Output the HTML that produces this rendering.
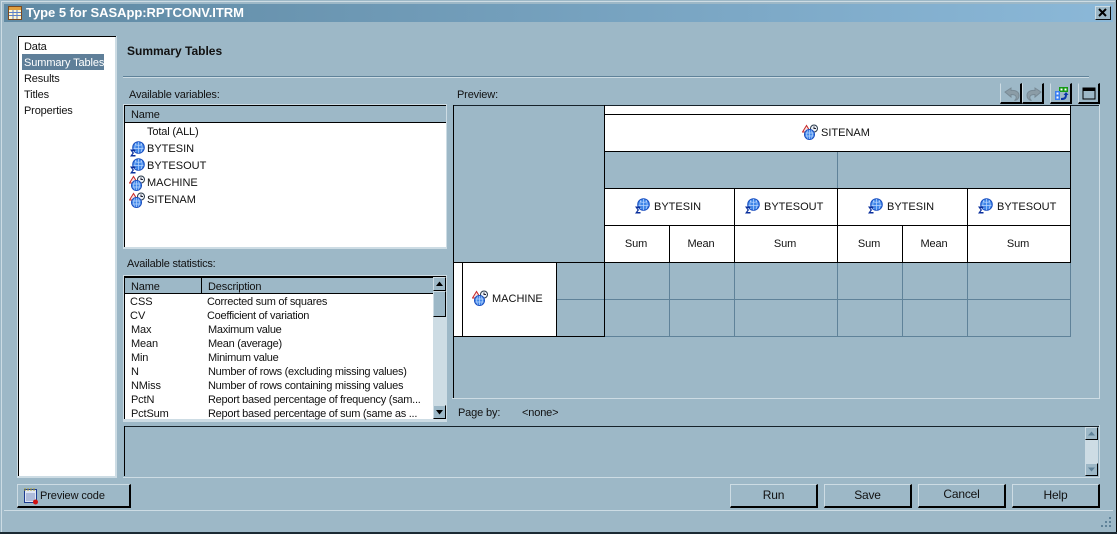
<!DOCTYPE html>
<html><head><meta charset="utf-8"><style>
html,body{margin:0;padding:0}
body{width:1117px;height:534px;overflow:hidden;position:relative;background:#9db8c7;font:11px/14px "Liberation Sans",sans-serif;color:#111}
div,span,svg{position:absolute}
.t{white-space:nowrap;letter-spacing:-.15px;margin-top:1px}
.u{white-space:nowrap;letter-spacing:0;margin-top:1px}
.d{white-space:nowrap;letter-spacing:-.27px;margin-top:1px}
.b{background:#000}.g{background:#5f8299}.l{background:#cddce4}.w{background:#fff}
.btn{box-sizing:border-box;background:#9db8c7;border:1px solid #cddce4;border-right:2px solid #000;border-bottom:2px solid #000;text-align:center;line-height:20px;height:24px;top:484px;font-size:12px;letter-spacing:-.2px}
.tb{box-sizing:border-box;width:22px;height:21px;top:83px;border-right:2px solid #000;border-bottom:2px solid #000;border-left:1px solid #cddce4;border-top:1px solid #9db8c7}
.c{text-align:center;white-space:nowrap;letter-spacing:-.1px;margin-top:1px}
</style></head><body>
<svg width="0" height="0" style="left:0;top:0"><defs>
<symbol id="m" viewBox="0 0 16 16"><circle cx="9.500" cy="6.500" r="5.800" fill="#3f86e8" stroke="#1a4fc0"/><path d="M6 3.500c2 1 5 1 7 0M4.500 7.500h10M9.500 1v11M7 2c-1.500 3-1.500 6 0 9M12 2c1.500 3 1.500 6 0 9" stroke="#bcd8ff" fill="none" stroke-width=".7"/><path d="M1 15.500h5.500v-1.500H3.500l1.500-2-1.500-2h3V8.500H1l2.500 3.500L1 15.500z" fill="#0a2f9c"/></symbol>
<symbol id="c" viewBox="0 0 16 16"><path d="M4.500 1.500L0.500 8h8z" fill="#fbe3e3" stroke="#c62828"/><circle cx="12" cy="4.500" r="3.500" fill="#eef3f8" stroke="#2b3a4a"/><path d="M12 2.500v2h2" stroke="#223" fill="none"/><circle cx="7.500" cy="10.500" r="5" fill="#3f86e8" stroke="#1a4fc0"/><path d="M3.500 9h8M3.500 12h8M7.500 6v9M5.500 6.500c-1 2.500-1 5.500 0 8M9.500 6.500c1 2.500 1 5.500 0 8" stroke="#bcd8ff" fill="none" stroke-width=".7"/></symbol>
</defs></svg>

<!-- window frame -->
<div class="l" style="left:1px;top:1px;width:1114px;height:1px"></div>
<div class="l" style="left:1px;top:1px;width:1px;height:531px"></div>
<div class="b" style="left:1116px;top:0;width:1px;height:534px"></div>
<div class="b" style="left:0;top:532px;width:1117px;height:2px;background:#1b2a33"></div>
<div style="left:4px;top:4px;width:1109px;height:18px;background:linear-gradient(90deg,#5f89a3,#8bb8d8)"></div>
<svg style="left:7px;top:5px" width="16" height="16" viewBox="0 0 16 16"><rect x="1.500" y="1.500" width="13" height="13" fill="#fff7d0" stroke="#7a4a20"/><rect x="2" y="2" width="12" height="3" fill="#e0a040"/><path d="M2 7.500h12M2 10.500h12M6 5v9M10 5v9" stroke="#5a80c8"/></svg>
<div class="t" style="left:26px;top:5px;margin-top:0;color:#fff;font-weight:bold;font-size:13px;line-height:16px;letter-spacing:-.03px">Type 5 for SASApp:RPTCONV.ITRM</div>
<div style="box-sizing:border-box;left:1095px;top:6px;width:16px;height:14px;background:#9db8c7;border:1px solid #cddce4;border-right-color:#111;border-bottom-color:#111"></div>
<svg style="left:1098px;top:8px" width="10" height="9" viewBox="0 0 10 9"><path d="M1 1l7 7M8 1l-7 7" stroke="#000" stroke-width="2"/></svg>

<!-- left nav -->
<div class="l" style="left:17px;top:36px;width:100px;height:442px"></div>
<div class="w" style="left:19px;top:37px;width:96px;height:439px"></div>
<div class="b" style="left:18px;top:37px;width:1px;height:439px"></div>
<div class="b" style="left:18px;top:36px;width:98px;height:1px"></div>
<div style="left:22px;top:54px;width:82px;height:16px;background:#5f7f99"></div>
<div class="t" style="left:24px;top:39px">Data</div>
<div class="t" style="left:24px;top:55px;color:#fff;letter-spacing:-.1px">Summary Tables</div>
<div class="t" style="left:24px;top:71px">Results</div>
<div class="t" style="left:24px;top:87px">Titles</div>
<div class="t" style="left:24px;top:103px">Properties</div>

<div class="t" style="left:127px;top:44px;margin-top:0;font-weight:bold;font-size:12px;letter-spacing:0">Summary Tables</div>
<div class="g" style="left:123px;top:76px;width:966px;height:1px"></div>
<div class="l" style="left:123px;top:77px;width:966px;height:1px"></div>

<!-- variables list -->
<div class="t" style="left:129px;top:87px;letter-spacing:-.2px">Available variables:</div>
<div class="l" style="left:123px;top:104px;width:324px;height:145px"></div>
<div class="w" style="left:125px;top:123px;width:321px;height:124px"></div>
<div style="left:125px;top:106px;width:321px;height:16px;background:#9db8c7"></div>
<div class="b" style="left:124px;top:105px;width:322px;height:1px"></div>
<div class="b" style="left:124px;top:105px;width:1px;height:142px"></div>
<div class="b" style="left:125px;top:122px;width:321px;height:1px"></div>
<div class="t" style="left:131px;top:107px">Name</div>
<div class="t" style="left:147px;top:124px">Total (ALL)</div>
<svg style="left:129px;top:141px" width="16" height="16"><use href="#m"/></svg><div class="u" style="left:147px;top:141px">BYTESIN</div>
<svg style="left:129px;top:158px" width="16" height="16"><use href="#m"/></svg><div class="u" style="left:147px;top:158px">BYTESOUT</div>
<svg style="left:129px;top:175px" width="16" height="16"><use href="#c"/></svg><div class="u" style="left:147px;top:175px">MACHINE</div>
<svg style="left:129px;top:192px" width="16" height="16"><use href="#c"/></svg><div class="u" style="left:147px;top:192px">SITENAM</div>

<!-- statistics list -->
<div class="t" style="left:127px;top:256px;letter-spacing:-.2px">Available statistics:</div>
<div class="l" style="left:123px;top:275px;width:324px;height:147px"></div>
<div class="w" style="left:125px;top:294px;width:308px;height:125px"></div>
<div style="left:125px;top:278px;width:308px;height:15px;background:#9db8c7"></div>
<div class="b" style="left:124px;top:276px;width:322px;height:2px"></div>
<div class="b" style="left:124px;top:276px;width:1px;height:143px"></div>
<div class="b" style="left:125px;top:293px;width:308px;height:1px"></div>
<div class="b" style="left:201px;top:277px;width:1px;height:16px"></div>
<div class="l" style="left:433px;top:278px;width:13px;height:141px"></div>
<div style="box-sizing:border-box;left:433px;top:277px;width:13px;height:14px;background:#9db8c7;border:1px solid #cddce4;border-right-color:#000;border-bottom-color:#000"></div>
<svg style="left:435px;top:281px" width="9" height="6"><path d="M4.500 0.500L8 5H1z" fill="#000"/></svg>
<div style="box-sizing:border-box;left:433px;top:291px;width:13px;height:26px;background:#9db8c7;border:1px solid #cddce4;border-right-color:#000;border-bottom-color:#000"></div>
<div style="box-sizing:border-box;left:433px;top:405px;width:13px;height:14px;background:#9db8c7;border:1px solid #cddce4;border-right-color:#000;border-bottom-color:#000"></div>
<svg style="left:435px;top:409px" width="9" height="6"><path d="M1 1h7L4.500 5.500z" fill="#000"/></svg>
<div class="t" style="left:131px;top:279px">Name</div><div class="t" style="left:208px;top:279px">Description</div>
<div class="u" style="left:130px;top:294px">CSS</div><div class="d" style="left:207px;top:294px">Corrected sum of squares</div>
<div class="u" style="left:130px;top:308px">CV</div><div class="d" style="left:207px;top:308px">Coefficient of variation</div>
<div class="t" style="left:131px;top:322px">Max</div><div class="d" style="left:208px;top:322px">Maximum value</div>
<div class="t" style="left:131px;top:336px">Mean</div><div class="d" style="left:208px;top:336px">Mean (average)</div>
<div class="t" style="left:131px;top:350px">Min</div><div class="d" style="left:208px;top:350px">Minimum value</div>
<div class="t" style="left:131px;top:364px">N</div><div class="d" style="left:208px;top:364px">Number of rows (excluding missing values)</div>
<div class="t" style="left:131px;top:378px">NMiss</div><div class="d" style="left:208px;top:378px">Number of rows containing missing values</div>
<div class="t" style="left:131px;top:392px">PctN</div><div class="d" style="left:208px;top:392px">Report based percentage of frequency (sam...</div>
<div class="t" style="left:131px;top:406px">PctSum</div><div class="d" style="left:208px;top:406px">Report based percentage of sum (same as ...</div>

<!-- preview -->
<div class="t" style="left:457px;top:87px">Preview:</div>
<div class="tb" style="left:1000px"></div><div class="tb" style="left:1022px"></div><div class="tb" style="left:1050px"></div><div class="tb" style="left:1078px"></div>
<svg style="left:1004px;top:86px" width="16" height="16"><path d="M1 6l6-4v2.500c5-.5 8 1.500 8 5 0 3-2 4.500-4.500 5 1.500-1 2-2.500 1.500-4-.5-1.500-2.500-2-5-2V11z" fill="#8b9ca6" stroke="#788a95"/></svg>
<svg style="left:1026px;top:86px" width="16" height="16"><path d="M15 6l-6-4v2.500c-5-.5-8 1.500-8 5 0 3 2 4.500 4.500 5-1.500-1-2-2.500-1.500-4 .5-1.500 2.500-2 5-2V11z" fill="#8b9ca6" stroke="#788a95"/></svg>
<svg style="left:1054px;top:86px" width="16" height="16"><rect x="5" y="1" width="9" height="5" fill="#149a14"/><rect x="6.500" y="2.500" width="2" height="2" fill="#fff"/><rect x="10.500" y="2.500" width="2" height="2" fill="#fff"/><rect x="1" y="5" width="5" height="9" fill="#3a7ef0"/><rect x="2.500" y="6.500" width="2" height="2" fill="#fff"/><rect x="2.500" y="10.500" width="2" height="2" fill="#fff"/><path d="M7 13c4 0 5-1 5-5" stroke="#0a36a8" stroke-width="2" fill="none"/><path d="M9.500 9l2.500-3 2.500 3z" fill="#0a36a8"/></svg>
<svg style="left:1082px;top:87px" width="14" height="13"><rect x="1" y="1" width="12" height="11" fill="#9db8c7" stroke="#000"/><rect x="1" y="1" width="12" height="3" fill="#000"/></svg>

<div class="b" style="left:453px;top:105px;width:647px;height:1px;background:#16222a"></div>
<div class="b" style="left:453px;top:105px;width:1px;height:293px"></div>
<div class="l" style="left:1099px;top:105px;width:1px;height:294px"></div>
<div class="l" style="left:452px;top:398px;width:648px;height:1px"></div>

<div class="w" style="left:605px;top:106px;width:465px;height:45px"></div>
<div class="w" style="left:605px;top:189px;width:465px;height:73px"></div>
<div class="w" style="left:454px;top:263px;width:102px;height:73px"></div>

<!-- grey grid -->
<div class="g" style="left:556px;top:299px;width:515px;height:1px"></div>
<div class="g" style="left:604px;top:336px;width:467px;height:1px"></div>
<div class="g" style="left:669px;top:263px;width:1px;height:74px"></div>
<div class="g" style="left:734px;top:263px;width:1px;height:74px"></div>
<div class="g" style="left:837px;top:263px;width:1px;height:74px"></div>
<div class="g" style="left:902px;top:263px;width:1px;height:74px"></div>
<div class="g" style="left:967px;top:263px;width:1px;height:74px"></div>
<div class="g" style="left:1070px;top:263px;width:1px;height:74px"></div>
<div class="g" style="left:837px;top:151px;width:1px;height:37px"></div>

<!-- black grid -->
<div class="b" style="left:604px;top:114px;width:467px;height:1px"></div>
<div class="b" style="left:604px;top:151px;width:467px;height:1px"></div>
<div class="b" style="left:604px;top:188px;width:467px;height:1px"></div>
<div class="b" style="left:604px;top:225px;width:467px;height:1px"></div>
<div class="b" style="left:454px;top:262px;width:617px;height:1px"></div>
<div class="b" style="left:454px;top:336px;width:151px;height:1px"></div>
<div class="b" style="left:604px;top:105px;width:1px;height:232px"></div>
<div class="b" style="left:1070px;top:105px;width:1px;height:158px"></div>
<div class="b" style="left:462px;top:262px;width:1px;height:74px"></div>
<div class="b" style="left:556px;top:262px;width:1px;height:74px"></div>
<div class="b" style="left:669px;top:225px;width:1px;height:37px"></div>
<div class="b" style="left:734px;top:188px;width:1px;height:74px"></div>
<div class="b" style="left:837px;top:188px;width:1px;height:74px"></div>
<div class="b" style="left:902px;top:225px;width:1px;height:37px"></div>
<div class="b" style="left:967px;top:188px;width:1px;height:74px"></div>

<!-- cell text -->
<svg style="left:802px;top:124px" width="16" height="16"><use href="#c"/></svg><div class="u" style="left:821px;top:125px">SITENAM</div>
<svg style="left:634px;top:198px" width="16" height="16"><use href="#m"/></svg><div class="u" style="left:654px;top:199px">BYTESIN</div>
<svg style="left:744px;top:198px" width="16" height="16"><use href="#m"/></svg><div class="u" style="left:764px;top:199px">BYTESOUT</div>
<svg style="left:867px;top:198px" width="16" height="16"><use href="#m"/></svg><div class="u" style="left:887px;top:199px">BYTESIN</div>
<svg style="left:977px;top:198px" width="16" height="16"><use href="#m"/></svg><div class="u" style="left:997px;top:199px">BYTESOUT</div>
<div class="c" style="left:604px;top:236px;width:64px">Sum</div>
<div class="c" style="left:669px;top:236px;width:64px">Mean</div>
<div class="c" style="left:734px;top:236px;width:102px">Sum</div>
<div class="c" style="left:837px;top:236px;width:64px">Sum</div>
<div class="c" style="left:902px;top:236px;width:64px">Mean</div>
<div class="c" style="left:967px;top:236px;width:102px">Sum</div>
<svg style="left:472px;top:290px" width="16" height="16"><use href="#c"/></svg><div class="u" style="left:492px;top:291px">MACHINE</div>

<div class="t" style="left:458px;top:405px">Page by:</div>
<div class="t" style="left:522px;top:405px">&lt;none&gt;</div>

<!-- log area -->
<div class="l" style="left:123px;top:477px;width:977px;height:1px"></div>
<div class="l" style="left:1099px;top:425px;width:1px;height:53px"></div>
<div class="b" style="left:124px;top:426px;width:975px;height:1px;background:#16222a"></div>
<div class="b" style="left:124px;top:426px;width:1px;height:50px"></div>
<div class="l" style="left:1085px;top:427px;width:13px;height:49px"></div>
<div style="box-sizing:border-box;left:1085px;top:427px;width:13px;height:13px;background:#9db8c7;border:1px solid #cddce4;border-right-color:#000;border-bottom-color:#000"></div>
<svg style="left:1087px;top:431px" width="9" height="5"><path d="M4.500 0.500L8 4.500H1z" fill="#5f8299"/></svg>
<div style="box-sizing:border-box;left:1085px;top:463px;width:13px;height:13px;background:#9db8c7;border:1px solid #cddce4;border-right-color:#000;border-bottom-color:#000"></div>
<svg style="left:1087px;top:467px" width="9" height="5"><path d="M1 .5h7L4.500 4.500z" fill="#5f8299"/></svg>

<!-- buttons -->
<div class="btn" style="left:17px;width:114px"></div>
<svg style="left:23px;top:488px" width="16" height="17" viewBox="0 0 16 17"><rect x="1.500" y="1.500" width="12" height="13" fill="#dfe6f4" stroke="#1a3a90"/><path d="M2 0v3M5 0v3M8 0v3M11 0v3" stroke="#b0a030"/><path d="M3 6h9M3 8h9M3 10h9M3 12h9" stroke="#7d90c0"/><circle cx="12.500" cy="14" r="2.500" fill="#d01010"/></svg>
<div class="t" style="left:40px;top:488px;letter-spacing:-.1px">Preview code</div>
<div class="btn" style="left:730px;width:88px">Run</div>
<div class="btn" style="left:824px;width:88px">Save</div>
<div class="btn" style="left:918px;width:88px;line-height:19px">Cancel</div>
<div class="btn" style="left:1012px;width:88px">Help</div>

<div class="l" style="left:4px;top:510px;width:1109px;height:1px"></div>
<!-- grip -->
<div class="g" style="left:1109px;top:517px;width:2px;height:2px"></div>
<div class="g" style="left:1105px;top:521px;width:2px;height:2px"></div><div class="g" style="left:1109px;top:521px;width:2px;height:2px"></div>
<div class="g" style="left:1101px;top:525px;width:2px;height:2px"></div><div class="g" style="left:1105px;top:525px;width:2px;height:2px"></div><div class="g" style="left:1109px;top:525px;width:2px;height:2px"></div>
</body></html>
